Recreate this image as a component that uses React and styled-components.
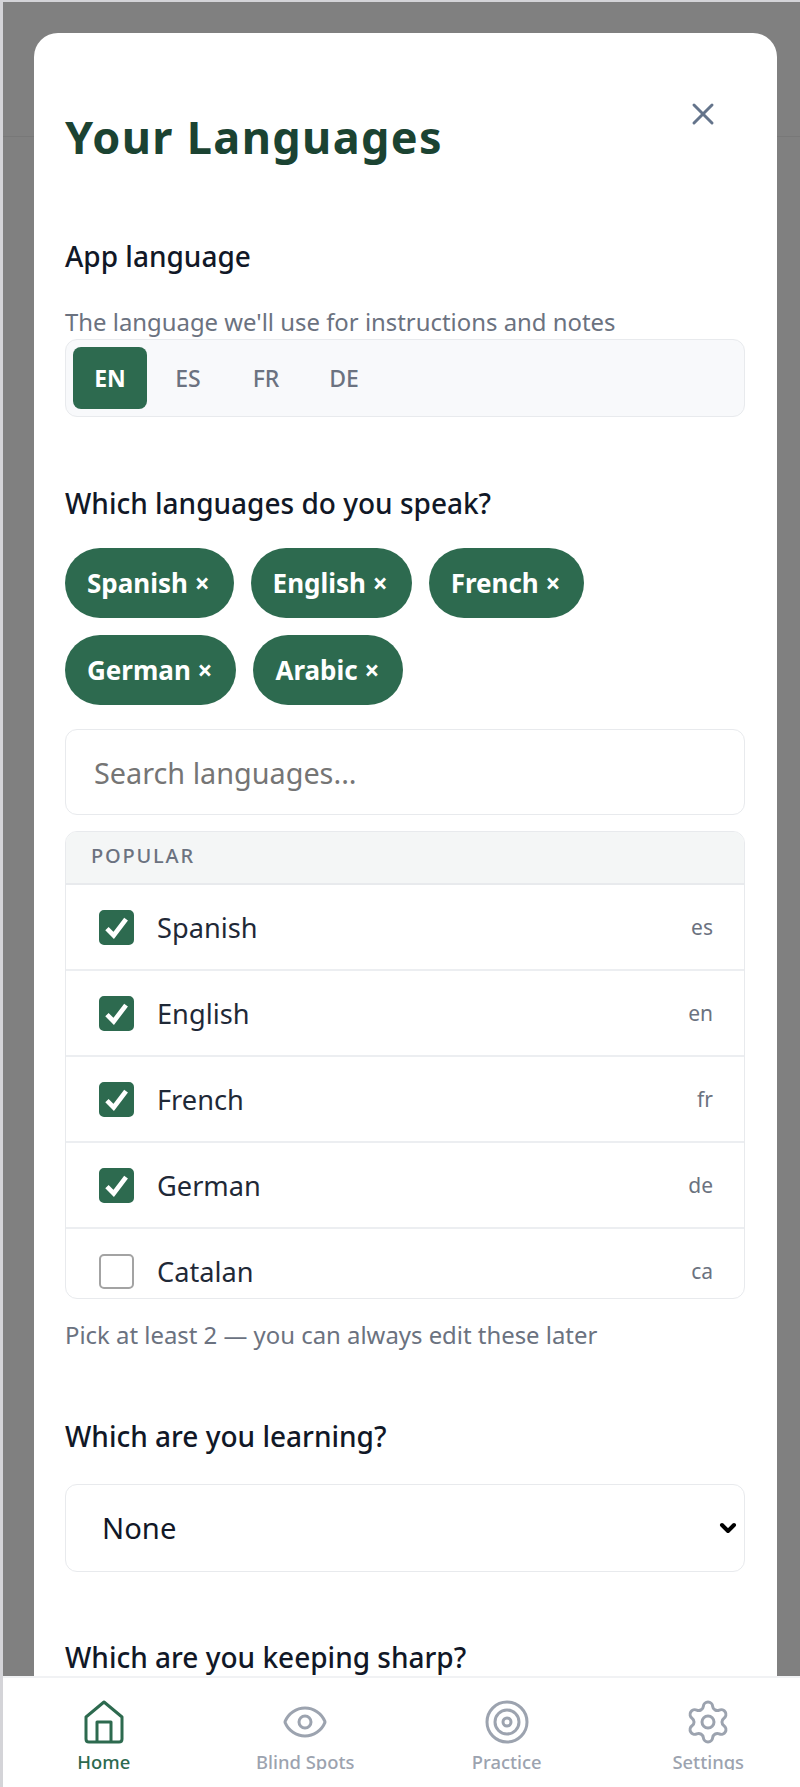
import React from 'react'
import styled, { createGlobalStyle } from 'styled-components'
import { ChevronDown, Eye, Settings, Target, X } from 'lucide-react'

const GlobalStyle = createGlobalStyle`
  html, body {
    margin: 0;
    padding: 0;
    background: #d4d4d8;
  }
  * {
    box-sizing: border-box;
  }
`

const Page = styled.div`
  display: flex;
  flex-direction: column;
  width: 800px;
  height: 1787px;
  padding: 2px 0 0 3px;
  overflow: hidden;
  font-family: 'Noto Sans', 'Open Sans', sans-serif;
  background: #d4d4d8;
`

const Backdrop = styled.div`
  flex: 1;
  min-height: 0;
  padding: 31px 23px 0 31px;
  overflow: hidden;
  background:
    linear-gradient(#787878, #787878) 0 134px / 100% 1px no-repeat,
    #808080;
`

const Modal = styled.section`
  position: relative;
  height: 100%;
  padding: 74px 32px 0 31px;
  overflow: hidden;
  background: #fff;
  border-radius: 24px 24px 0 0;
`

const CloseButton = styled.button`
  position: absolute;
  top: 63px;
  right: 56px;
  display: flex;
  padding: 0;
  color: #64748b;
  background: none;
  border: 0;
`

const Title = styled.h1`
  margin: 0;
  font-size: 45px;
  line-height: 60px;
  font-weight: 700;
  letter-spacing: 1.35px;
  color: #1b4332;
`

const Label = styled.h2`
  margin: ${props => props.$top}px 0 0;
  font-size: 28px;
  line-height: 36px;
  font-weight: 500;
  color: #111827;
`

const Muted = styled.p`
  margin: ${props => props.$top}px 0 0;
  font-size: 23.9px;
  line-height: 32px;
  color: #6b7280;
`

const Segment = styled.div`
  display: flex;
  gap: 4px;
  height: 78px;
  margin-top: 1px;
  padding: 7px;
  background: #f8f9fb;
  border: 1px solid #e8eaed;
  border-radius: 12px;
`

const SegmentOption = styled.button`
  width: 74px;
  padding: 0;
  font-family: inherit;
  font-size: 23px;
  font-weight: ${props => (props.$active ? 700 : 500)};
  color: ${props => (props.$active ? '#fff' : '#6b7280')};
  background: ${props => (props.$active ? '#2d6a4f' : 'transparent')};
  border: 0;
  border-radius: 8px;
`

const Chips = styled.div`
  display: flex;
  flex-wrap: wrap;
  gap: 17px 17px;
  margin-top: 27px;
`

const Chip = styled.span`
  display: flex;
  align-items: center;
  height: 70px;
  padding: 0 24px 0 22px;
  font-size: 26px;
  font-weight: 700;
  color: #fff;
  background: #2d6a4f;
  border-radius: 35px;
`

const Search = styled.input`
  display: block;
  width: 100%;
  height: 86px;
  margin-top: 24px;
  padding: 0 28px;
  font-family: inherit;
  font-size: 28.8px;
  color: #111827;
  background: #fff;
  border: 1px solid #e8eaed;
  border-radius: 12px;
  outline: none;

  &::placeholder {
    color: #757575;
    opacity: 1;
  }
`

const LangList = styled.div`
  height: 468px;
  margin-top: 16px;
  overflow: hidden;
  border: 1px solid #e8eaed;
  border-radius: 12px;
`

const ListHeader = styled.div`
  display: flex;
  align-items: center;
  height: 53px;
  padding: 0 0 4px 25px;
  font-size: 20px;
  font-weight: 500;
  letter-spacing: 1.8px;
  color: #6b7280;
  background: #f4f6f6;
  border-bottom: 2px solid #e8eaed;
`

const LangRow = styled.div`
  display: flex;
  align-items: center;
  flex: none;
  height: 86px;
  padding: 0 31px 0 33px;
  border-bottom: 2px solid #eceef1;
`

const Box = styled.span`
  display: flex;
  align-items: center;
  justify-content: center;
  flex: none;
  width: 35px;
  height: 35px;
  color: #fff;
  background: ${props => (props.$checked ? '#2d6a4f' : '#fff')};
  border: 2px solid ${props => (props.$checked ? '#2d6a4f' : '#a3a3a3')};
  border-radius: 5px;
`

const LangName = styled.span`
  flex: 1;
  margin-left: 23px;
  font-size: 27.2px;
  color: #1f2937;
`

const LangCode = styled.span`
  font-size: 21px;
  color: #6b7280;
`

const SelectWrap = styled.div`
  position: relative;
  margin-top: 30px;
  color: #000;

  svg {
    position: absolute;
    top: 32px;
    right: 5px;
    pointer-events: none;
  }
`

const LangSelect = styled.select`
  display: block;
  width: 100%;
  height: 88px;
  padding: 0 36px;
  font-family: inherit;
  font-size: 29.2px;
  color: #111827;
  background: #fff;
  border: 1px solid #e8eaed;
  border-radius: 12px;
  outline: none;
  appearance: none;
`

const Nav = styled.nav`
  display: grid;
  grid-template-columns: repeat(4, 201.5px);
  flex: none;
  height: 111px;
  background: #fff;
  border-top: 2px solid #f1f2f4;
`

const NavItem = styled.a`
  display: flex;
  flex-direction: column;
  align-items: center;
  color: ${props => (props.$active ? '#2d6a4f' : '#9ca3af')};
`

const NavIcon = styled.span`
  display: flex;
  align-items: center;
  justify-content: center;
  height: 48px;
  margin-top: 20px;
`

const NavLabel = styled.span`
  height: 18px;
  margin-top: 6px;
  overflow: hidden;
  font-size: 18.4px;
  line-height: 19px;
  font-weight: 500;
`

const languages = [
  ['Spanish', 'es', true],
  ['English', 'en', true],
  ['French', 'fr', true],
  ['German', 'de', true],
  ['Catalan', 'ca', false],
]

const HomeIcon = () => (
  <svg width="40" height="44" viewBox="0 0 40 44" fill="none" stroke="currentColor" strokeWidth="3" strokeLinejoin="round">
    <path d="M20 2 L38 17 V39 Q38 42 35 42 H5 Q2 42 2 39 V17 Z" />
    <path d="M13 42 V22 H27 V42" />
  </svg>
)

const Tick = () => (
  <svg width="27" height="27" viewBox="0 0 24 24" fill="none" stroke="currentColor" strokeWidth="4.2">
    <path d="M3.5 13 L9.5 19 L20.5 4.5" />
  </svg>
)

export default function App() {
  return (
    <Page>
      <GlobalStyle />
      <Backdrop>
        <Modal>
          <CloseButton aria-label="Close"><X size={36} strokeWidth={2} /></CloseButton>
          <Title>Your Languages</Title>

          <Label $top={71}>App language</Label>
          <Muted $top={32}>The language we'll use for instructions and notes</Muted>
          <Segment>
            <SegmentOption $active>EN</SegmentOption>
            <SegmentOption>ES</SegmentOption>
            <SegmentOption>FR</SegmentOption>
            <SegmentOption>DE</SegmentOption>
          </Segment>

          <Label $top={68}>Which languages do you speak?</Label>
          <Chips>
            {['Spanish', 'English', 'French', 'German', 'Arabic'].map(name => (
              <Chip key={name}>{name} ×</Chip>
            ))}
          </Chips>
          <Search placeholder="Search languages..." />

          <LangList>
            <ListHeader>POPULAR</ListHeader>
            {languages.map(([name, code, checked]) => (
              <LangRow key={code}>
                <Box $checked={checked}>{checked && <Tick />}</Box>
                <LangName>{name}</LangName>
                <LangCode>{code}</LangCode>
              </LangRow>
            ))}
          </LangList>
          <Muted $top={20}>Pick at least 2 — you can always edit these later</Muted>

          <Label $top={67}>Which are you learning?</Label>
          <SelectWrap>
            <LangSelect defaultValue="none">
              <option value="none">None</option>
            </LangSelect>
            <ChevronDown size={24} strokeWidth={4} />
          </SelectWrap>

          <Label $top={67}>Which are you keeping sharp?</Label>
        </Modal>
      </Backdrop>
      <Nav>
        <NavItem $active>
          <NavIcon><HomeIcon /></NavIcon>
          <NavLabel>Home</NavLabel>
        </NavItem>
        <NavItem>
          <NavIcon><Eye size={48} strokeWidth={1.5} /></NavIcon>
          <NavLabel>Blind Spots</NavLabel>
        </NavItem>
        <NavItem>
          <NavIcon><Target size={48} strokeWidth={1.5} /></NavIcon>
          <NavLabel>Practice</NavLabel>
        </NavItem>
        <NavItem>
          <NavIcon><Settings size={48} strokeWidth={1.5} /></NavIcon>
          <NavLabel>Settings</NavLabel>
        </NavItem>
      </Nav>
    </Page>
  )
}
